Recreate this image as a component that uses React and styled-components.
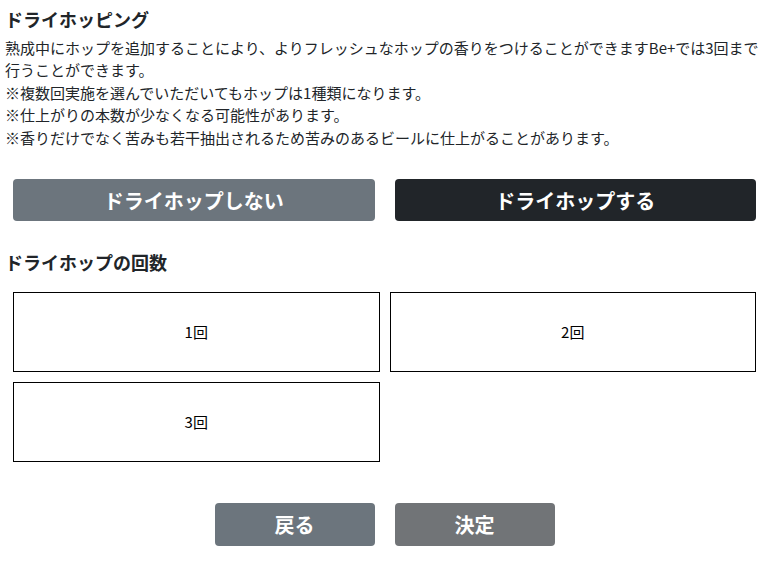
import React, { useState } from 'react';
import styled, { createGlobalStyle } from 'styled-components';

const GlobalStyle = createGlobalStyle`
    body {
        margin: 0;
        background: #fff;
        color: #212529;
        font-family: 'Noto Sans CJK JP', 'Noto Sans', sans-serif;
    }
`;

const Page = styled.div`
    width: 759px;
    margin-left: 5px;
    padding-top: 9px;
`;

const Title = styled.h5`
    font-size: 18px;
    font-weight: 700;
    line-height: 1.2;
    margin: 0 0 6px;
`;

const Note = styled.p`
    font-size: 15px;
    line-height: 1.5;
    margin: 0;
`;

const ChoiceRow = styled.div`
    display: grid;
    grid-template-columns: 1fr 1fr;
    column-gap: 20px;
    padding: 0 8px;
    margin-top: 30px;
`;

const Btn = styled.button`
    height: ${(p) => p.$h || 42}px;
    width: ${(p) => (p.$w ? `${p.$w}px` : '100%')};
    border: none;
    border-radius: 4px;
    background: ${(p) => p.$bg};
    color: #fff;
    font-family: inherit;
    font-size: 20px;
    font-weight: 700;
    padding: 0;
    cursor: pointer;
`;

const SubTitle = styled.h5`
    font-size: 18px;
    font-weight: 700;
    line-height: 1.2;
    margin: 31px 0 18px;
`;

const OptionGrid = styled.div`
    display: grid;
    grid-template-columns: 1fr 1fr;
    grid-auto-rows: 80px;
    gap: 10px;
    padding: 0 8px;
`;

const Option = styled.div`
    display: flex;
    align-items: center;
    justify-content: center;
    border: 1px solid #000;
    font-size: 15px;
    color: #000;
    background: #fff;
`;

const Footer = styled.div`
    display: flex;
    justify-content: center;
    gap: 20px;
    margin-top: 41px;
`;

const App = () => {
  const [dry, setDry] = useState(true);
  return (
    <Page>
      <GlobalStyle />
      <Title>ドライホッピング</Title>
      <Note>
        熟成中にホップを追加することにより、よりフレッシュなホップの香りをつけることができますBe+では3回まで<br />
        行うことができます。<br />
        ※複数回実施を選んでいただいてもホップは1種類になります。<br />
        ※仕上がりの本数が少なくなる可能性があります。<br />
        ※香りだけでなく苦みも若干抽出されるため苦みのあるビールに仕上がることがあります。
      </Note>
      <ChoiceRow>
        <Btn $bg={dry ? '#6c757d' : '#212529'} onClick={() => setDry(false)}>ドライホップしない</Btn>
        <Btn $bg={dry ? '#212529' : '#6c757d'} onClick={() => setDry(true)}>ドライホップする</Btn>
      </ChoiceRow>
      <SubTitle>ドライホップの回数</SubTitle>
      <OptionGrid>
        <Option>1回</Option>
        <Option>2回</Option>
        <Option>3回</Option>
      </OptionGrid>
      <Footer>
        <Btn $bg="#6c757d" $w={160} $h={43}>戻る</Btn>
        <Btn $bg="#717477" $w={160} $h={43}>決定</Btn>
      </Footer>
    </Page>
  );
};

export default App;
